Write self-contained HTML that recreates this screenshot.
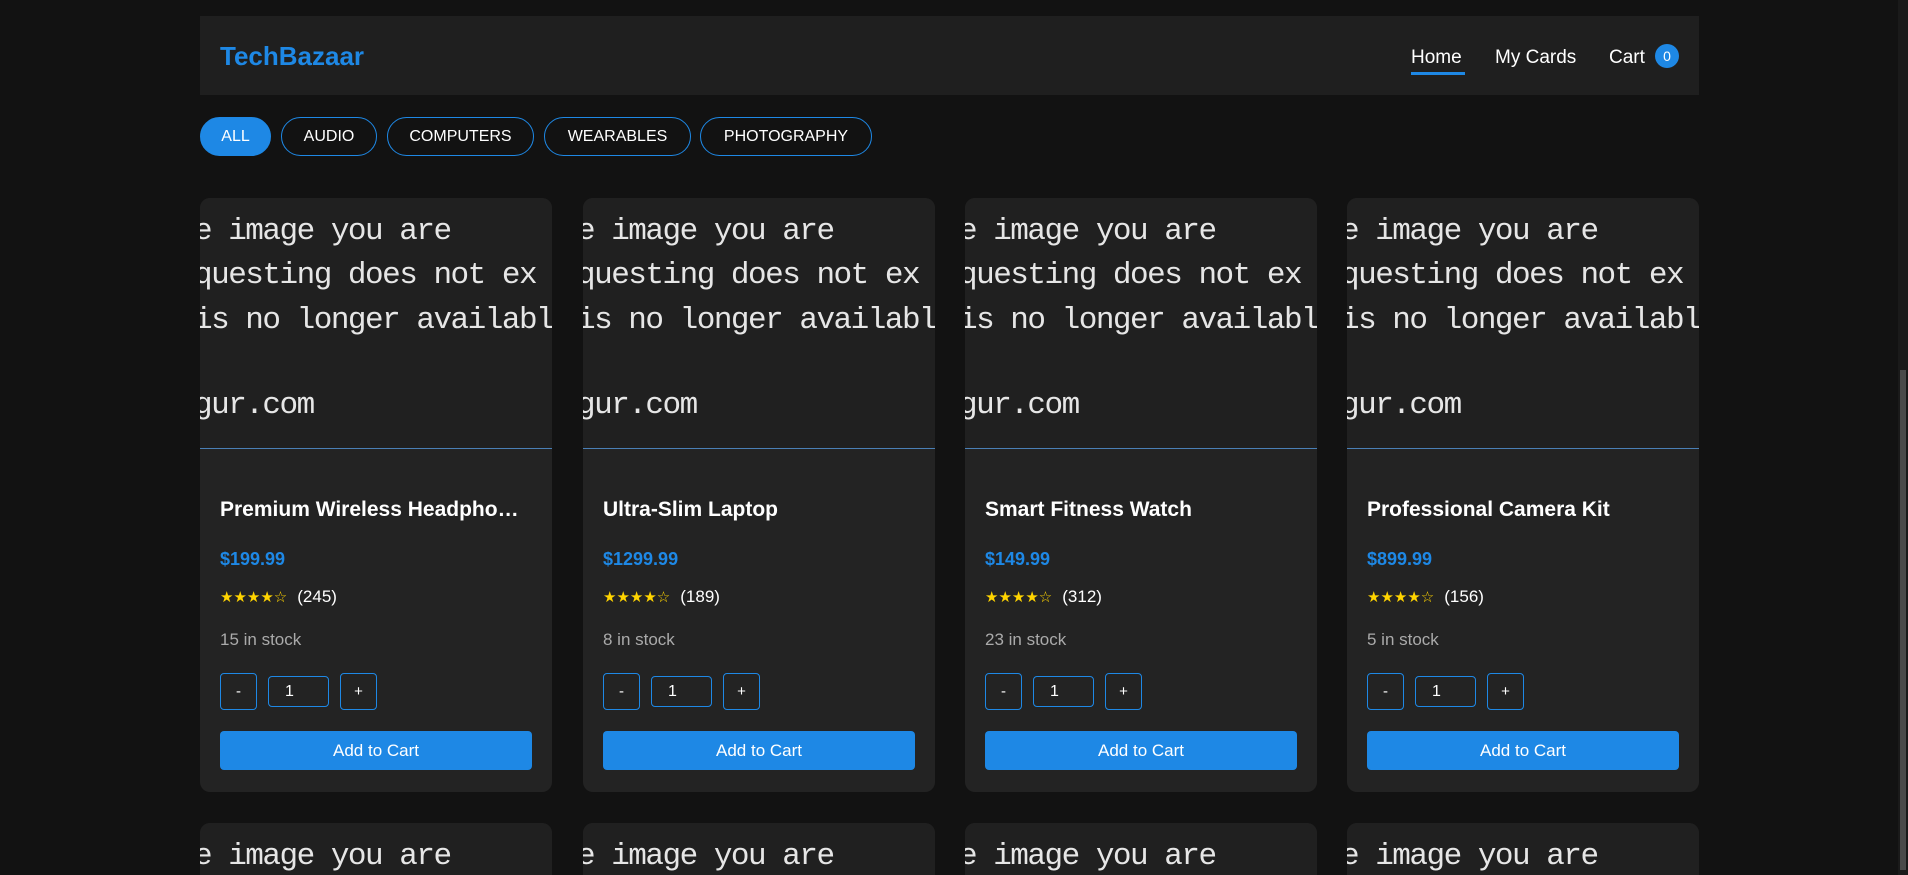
<!DOCTYPE html>
<html><head><meta charset="utf-8"><style>
*{box-sizing:border-box;margin:0;padding:0}
html,body{width:1908px;height:875px;overflow:hidden}
body{background:#121212;font-family:"Liberation Sans",sans-serif;color:#fff;position:relative}
.hdr{position:absolute;left:200px;top:16px;width:1499px;height:79px;background:#1f1f1f}
.logo{position:absolute;left:20px;top:25px;font-size:26px;font-weight:bold;color:#1e88e5}
.nav{position:absolute;top:31px;font-size:19px;color:#fff}
.ul{position:absolute;left:1211px;top:56px;width:54px;height:3px;background:#1e88e5}
.badge{position:absolute;left:1455px;top:28px;width:24px;height:24px;border-radius:50%;background:#1e88e5;font-size:14px;text-align:center;line-height:24px}
.f{position:absolute;top:117px;height:39px;border:1px solid #1e88e5;border-radius:20px;font-size:16px;text-align:center;line-height:37px;color:#fff}
.card{position:absolute;width:352px;height:594px;background:#232323;border-radius:10px;overflow:hidden}
.img{position:absolute;left:0;top:0;width:352px;height:251px;border-bottom:1px solid #4a7fb5;background:#202020;overflow:hidden}
.img div{position:absolute;left:-6px;font-family:"Liberation Mono",monospace;font-size:31px;color:#e6e6e6;white-space:pre;letter-spacing:-1.5px}
.t{position:absolute;left:20px;top:300px;font-size:21px;font-weight:bold;white-space:nowrap}
.p{position:absolute;left:20px;top:351px;font-size:18px;font-weight:bold;color:#1e88e5}
.s{position:absolute;left:20px;top:389px;font-size:17px}
.s b{color:#ffd400;font-weight:normal;font-size:15px;margin-right:10px}
.k{position:absolute;left:20px;top:432px;font-size:17px;color:#aaa}
.q{position:absolute;top:475px;width:37px;height:37px;border:1px solid #1e88e5;border-radius:4px;text-align:center;line-height:35px;font-size:15px}
.in{position:absolute;left:68px;top:478px;width:61px;height:31px;border:1px solid #1e88e5;border-radius:4px;font-size:16px;line-height:29px;padding-left:16px}
.btn{position:absolute;left:20px;top:533px;width:312px;height:39px;background:#1e88e5;border-radius:4px;text-align:center;line-height:39px;font-size:17px}
</style></head><body>
<div class="hdr">
<div class="logo">TechBazaar</div>
<div class="nav" style="left:1211px">Home</div>
<div class="ul"></div>
<div class="nav" style="left:1295px">My Cards</div>
<div class="nav" style="left:1409px">Cart</div>
<div class="badge">0</div>
</div>
<div class="f" style="left:200px;width:71px;background:#1e88e5">ALL</div>
<div class="f" style="left:281px;width:96px">AUDIO</div>
<div class="f" style="left:387px;width:147px">COMPUTERS</div>
<div class="f" style="left:544px;width:147px">WEARABLES</div>
<div class="f" style="left:700px;width:172px">PHOTOGRAPHY</div>

<div id="cards"></div>
<script>
var d=[["Premium Wireless Headpho…","$199.99","(245)","15"],["Ultra-Slim Laptop","$1299.99","(189)","8"],["Smart Fitness Watch","$149.99","(312)","23"],["Professional Camera Kit","$899.99","(156)","5"]];
var xs=[200,583,965,1347],h="";
var im='<div class="img"><div style="top:16px">e image you are</div><div style="top:60px">questing does not ex</div><div style="top:105px">is no longer availabl</div><div style="top:190px">gur.com</div></div>';
for(var i=0;i<4;i++){
h+='<div class="card" style="left:'+xs[i]+'px;top:198px">'+im+'<div class="t">'+d[i][0]+'</div><div class="p">'+d[i][1]+'</div><div class="s"><b>★★★★☆</b>'+d[i][2]+'</div><div class="k">'+d[i][3]+' in stock</div><div class="q" style="left:20px">-</div><div class="in">1</div><div class="q" style="left:140px">+</div><div class="btn">Add to Cart</div></div>';
h+='<div class="card" style="left:'+xs[i]+'px;top:823px;height:52px;border-radius:10px 10px 0 0">'+im+'</div>';
}
document.getElementById("cards").innerHTML=h;
</script>
<div style="position:absolute;left:1898px;top:0;width:10px;height:875px;background:#1a1a1a"></div>
<div style="position:absolute;left:1900px;top:370px;width:6px;height:500px;background:#4a4a4a"></div>
</body></html>
